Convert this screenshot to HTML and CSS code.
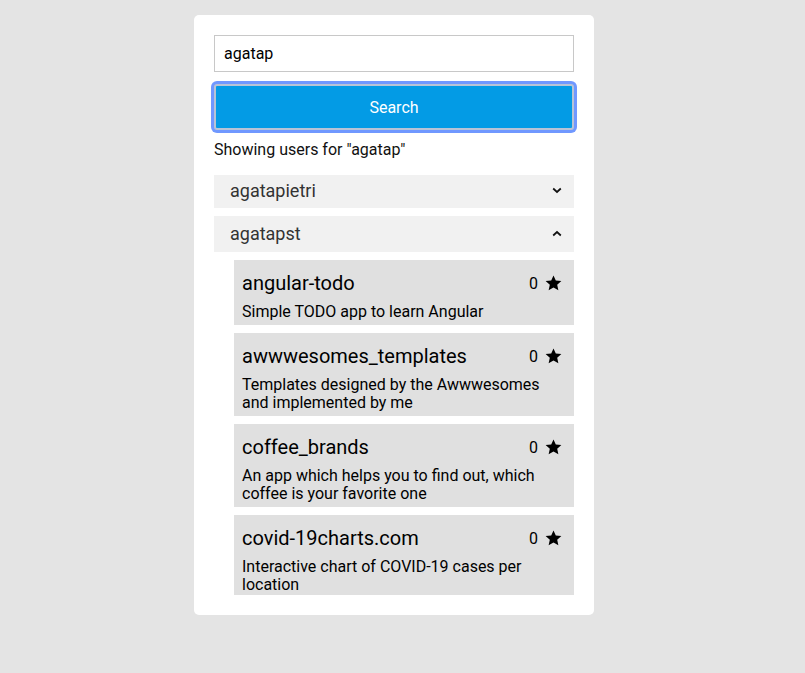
FILE: index.html
```html
<!DOCTYPE html>
<html lang="en">
<head>
<meta charset="utf-8">
<title>GitHub users</title>
<link rel="stylesheet" href="styles.css">
</head>
<body>
<main class="panel">
  <form class="search">
    <input class="search-input" type="text" value="agatap">
    <button class="search-btn" type="button">Search</button>
  </form>
  <p class="info">Showing users for "agatap"</p>
  <div class="results">
    <div class="user">
      <span class="user-name">agatapietri</span>
      <svg class="chev" width="10" height="7" viewBox="0 0 10 7"><polyline points="1.2,1.5 5,5 8.8,1.5" fill="none" stroke="#111" stroke-width="1.7"/></svg>
    </div>
    <div class="user open">
      <span class="user-name">agatapst</span>
      <svg class="chev" width="10" height="7" viewBox="0 0 10 7"><polyline points="1.2,5.5 5,2 8.8,5.5" fill="none" stroke="#111" stroke-width="1.7"/></svg>
    </div>
    <div class="repos">
      <div class="repo">
        <div class="repo-head"><span class="repo-title">angular-todo</span><span class="stars">0 <svg class="star" width="17" height="16" viewBox="0 0 24 23"><path d="M12 .6l3.3 7.3 8 .8-6 5.4 1.7 7.8L12 17.9l-7 4 1.7-7.8-6-5.4 8-.8z" fill="#000"/></svg></span></div>
        <p class="repo-desc">Simple TODO app to learn Angular</p>
      </div>
      <div class="repo">
        <div class="repo-head"><span class="repo-title">awwwesomes_templates</span><span class="stars">0 <svg class="star" width="17" height="16" viewBox="0 0 24 23"><path d="M12 .6l3.3 7.3 8 .8-6 5.4 1.7 7.8L12 17.9l-7 4 1.7-7.8-6-5.4 8-.8z" fill="#000"/></svg></span></div>
        <p class="repo-desc">Templates designed by the Awwwesomes and implemented by me</p>
      </div>
      <div class="repo">
        <div class="repo-head"><span class="repo-title">coffee_brands</span><span class="stars">0 <svg class="star" width="17" height="16" viewBox="0 0 24 23"><path d="M12 .6l3.3 7.3 8 .8-6 5.4 1.7 7.8L12 17.9l-7 4 1.7-7.8-6-5.4 8-.8z" fill="#000"/></svg></span></div>
        <p class="repo-desc">An app which helps you to find out, which coffee is your favorite one</p>
      </div>
      <div class="repo">
        <div class="repo-head"><span class="repo-title">covid-19charts.com</span><span class="stars">0 <svg class="star" width="17" height="16" viewBox="0 0 24 23"><path d="M12 .6l3.3 7.3 8 .8-6 5.4 1.7 7.8L12 17.9l-7 4 1.7-7.8-6-5.4 8-.8z" fill="#000"/></svg></span></div>
        <p class="repo-desc">Interactive chart of COVID-19 cases per location</p>
      </div>
    </div>
  </div>
</main>
</body>
</html>
```

FILE: styles.css
```css
html, body {
  margin: 0;
  padding: 0;
}
body {
  background: #e4e4e4;
  font-family: Roboto, "Liberation Sans", sans-serif;
  color: #000;
  min-height: 673px;
}
.panel {
  width: 400px;
  height: 600px;
  box-sizing: border-box;
  margin: 15px 0 0 194px;
  background: #fff;
  border-radius: 5px;
  padding: 20px;
  display: flex;
  flex-direction: column;
}
.search {
  display: flex;
  flex-direction: column;
  gap: 12px;
}
.search-input {
  height: 37px;
  box-sizing: border-box;
  border: 1px solid #c8c8c8;
  padding: 0 9px;
  font-family: Roboto, "Liberation Sans", sans-serif;
  font-size: 16px;
  color: #000;
  margin: 0;
  outline: none;
}
.search-btn {
  height: 46px;
  box-sizing: border-box;
  background: #039be5;
  color: #fff;
  border: 2px solid #b8c3d6;
  border-radius: 3px;
  box-shadow: 0 0 0 3px #7098ff;
  font-family: Roboto, "Liberation Sans", sans-serif;
  font-size: 16px;
  margin: 0;
}
.info {
  margin: 10px 0 16px;
  font-size: 16px;
  color: #111;
}
.results {
  flex: 1;
  min-height: 0;
  overflow: hidden;
  display: flex;
  flex-direction: column;
  gap: 8px;
}
.user {
  flex: none;
  background: #f1f1f1;
  display: flex;
  justify-content: space-between;
  align-items: center;
  padding: 5px 12px 7px 16px;
  font-size: 18px;
  color: #333;
}
.user.open {
  padding: 7px 12px 8px 16px;
}
.chev {
  display: block;
}
.repos {
  margin-left: 20px;
  display: flex;
  flex-direction: column;
  gap: 8px;
}
.repo {
  flex: none;
  background: #e0e0e0;
  padding: 11px 12px 4px 8px;
}
.repo-head {
  display: flex;
  justify-content: space-between;
  align-items: center;
  height: 24px;
}
.repo-title {
  font-size: 20px;
  line-height: 24px;
}
.stars {
  display: flex;
  align-items: center;
  gap: 7px;
  font-size: 16px;
}
.star {
  display: block;
}
.repo-desc {
  margin: 8px 0 0;
  font-size: 16px;
  line-height: 18px;
  padding-right: 20px;
}
```
